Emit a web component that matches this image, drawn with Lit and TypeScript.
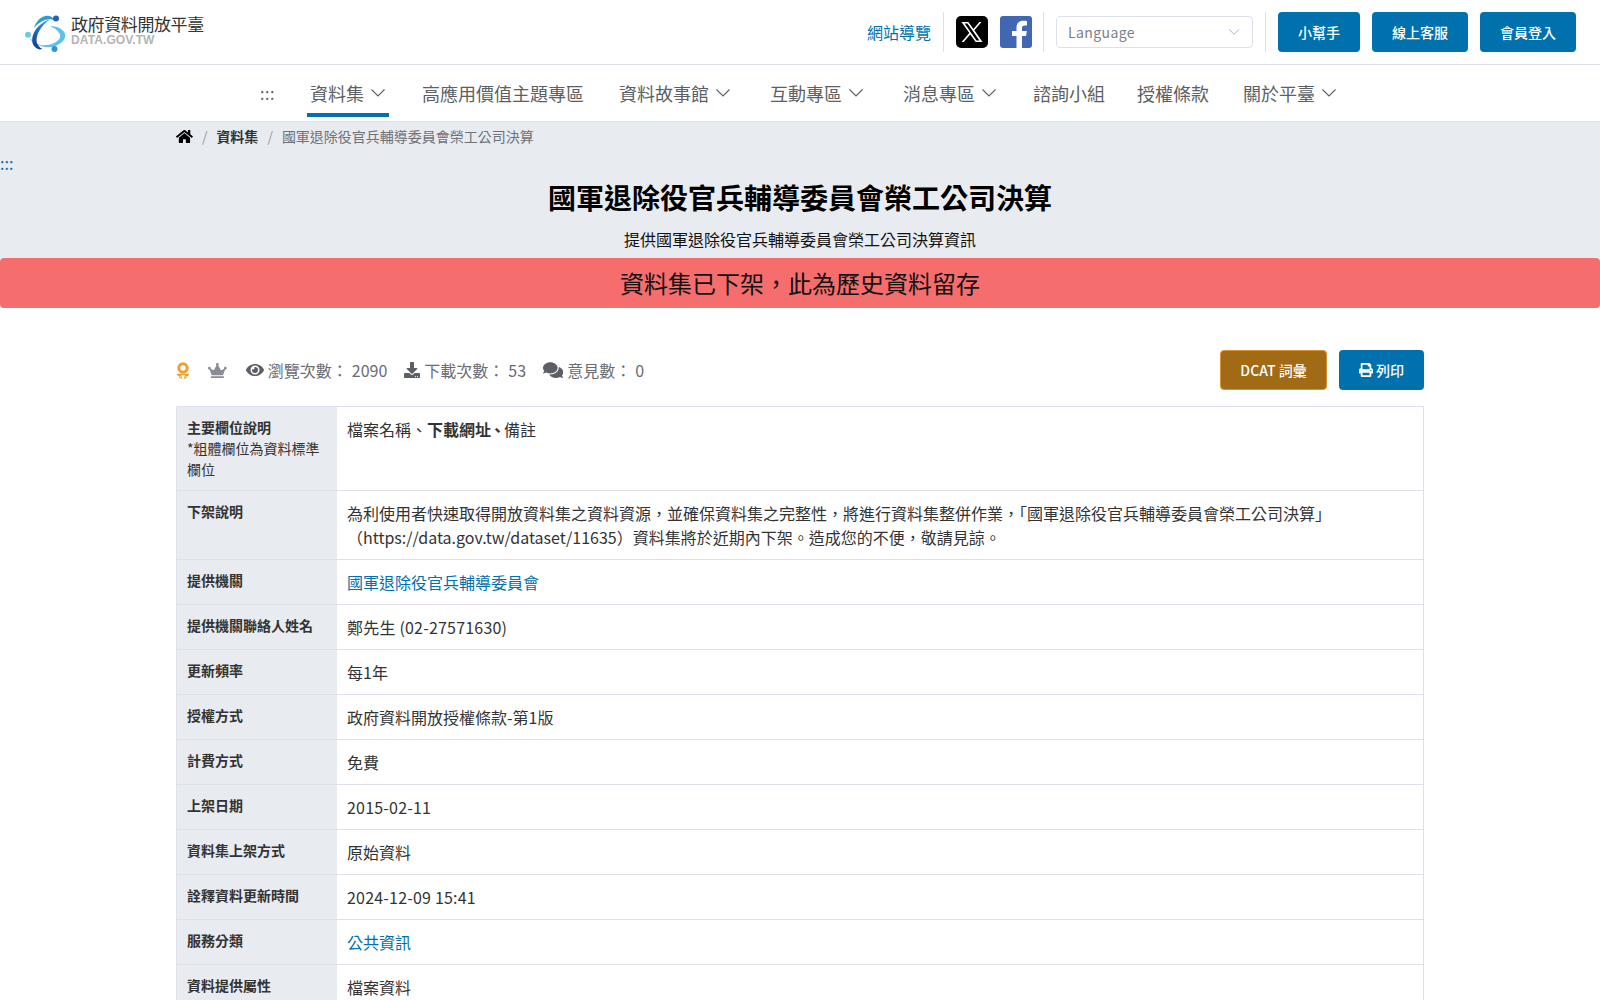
import { LitElement, html, css, svg } from "lit";
import { customElement } from "lit/decorators.js";

const chevron = html`<svg class="chev" viewBox="0 0 16 16"><path d="M1.5 4.5 8 11l6.5-6.5" fill="none" stroke="currentColor" stroke-width="1.1"/></svg>`;

const faIcon = (w: number, d: string, cls = "") =>
  html`<svg class="fa ${cls}" viewBox="0 0 ${w} 512"><path fill="currentColor" d=${d}/></svg>`;

const HOME = "M280.37 148.26L96 300.11V464a16 16 0 0 0 16 16l112.06-.29a16 16 0 0 0 15.92-16V368a16 16 0 0 1 16-16h64a16 16 0 0 1 16 16v95.64a16 16 0 0 0 16 16.05L464 480a16 16 0 0 0 16-16V300L295.67 148.26a12.19 12.19 0 0 0-15.3 0zM571.6 251.47L488 182.56V44.05a12 12 0 0 0-12-12h-56a12 12 0 0 0-12 12v72.61L318.47 43a48 48 0 0 0-61 0L4.34 251.47a12 12 0 0 0-1.6 16.9l25.5 31A12 12 0 0 0 45.15 301l235.22-193.74a12.19 12.19 0 0 1 15.3 0L530.9 301a12 12 0 0 0 16.9-1.6l25.5-31a12 12 0 0 0-1.7-16.93z";
const EYE = "M572.52 241.4C518.29 135.59 410.93 64 288 64S57.68 135.64 3.48 241.41a32.4 32.4 0 0 0 0 29.2C57.71 376.41 165.07 448 288 448s230.32-71.64 284.52-177.41a32.4 32.4 0 0 0 0-29.19zM288 400a144 144 0 1 1 144-144 143.93 143.93 0 0 1-144 144zm0-240a95.31 95.31 0 0 0-25.31 3.79 47.85 47.85 0 0 1-66.9 66.9A95.78 95.78 0 1 0 288 160z";
const DOWNLOAD = "M216 0h80c13.3 0 24 10.7 24 24v168h87.7c17.8 0 26.7 21.5 14.1 34.1L269.7 378.3c-7.5 7.5-19.8 7.5-27.3 0L90.1 226.1c-12.6-12.6-3.7-34.1 14.1-34.1H192V24c0-13.3 10.7-24 24-24zm296 376v112c0 13.3-10.7 24-24 24H24c-13.3 0-24-10.7-24-24V376c0-13.3 10.7-24 24-24h146.7l49 49c20.1 20.1 52.5 20.1 72.6 0l49-49H488c13.3 0 24 10.7 24 24zm-124 88c0-11-9-20-20-20s-20 9-20 20 9 20 20 20 20-9 20-20zm64 0c0-11-9-20-20-20s-20 9-20 20 9 20 20 20 20-9 20-20z";
const COMMENTS = "M416 192c0-88.4-93.1-160-208-160S0 103.6 0 192c0 34.3 14.1 65.9 38 92-13.4 30.2-35.5 54.2-35.8 54.5-2.2 2.3-2.8 5.7-1.5 8.7S4.8 352 8 352c36.6 0 66.9-12.3 88.7-25 32.2 15.7 70.3 25 111.3 25 114.9 0 208-71.6 208-160zm122 220c23.9-26 38-57.7 38-92 0-66.9-53.5-124.2-129.3-148.1.9 6.6 1.3 13.3 1.3 20.1 0 105.9-107.7 192-240 192-10.8 0-21.3-.8-31.7-1.9C207.8 439.6 281.8 480 368 480c41 0 79.1-9.2 111.3-25 21.8 12.7 52.1 25 88.7 25 3.2 0 6.1-1.9 7.3-4.8 1.3-2.9.7-6.3-1.5-8.7-.3-.3-22.4-24.2-35.8-54.5z";
const PRINT = "M448 192V77.25c0-8.49-3.37-16.62-9.37-22.63L393.37 9.37c-6-6-14.14-9.37-22.63-9.37H96C78.33 0 64 14.33 64 32v160c-35.35 0-64 28.65-64 64v112c0 8.84 7.16 16 16 16h48v96c0 17.67 14.33 32 32 32h320c17.67 0 32-14.33 32-32v-96h48c8.84 0 16-7.16 16-16V256c0-35.35-28.65-64-64-64zm-64 256H128v-96h256v96zm0-224H128V64h192v48c0 8.84 7.16 16 16 16h48v96zm48 72c-13.25 0-24-10.75-24-24 0-13.26 10.75-24 24-24s24 10.74 24 24c0 13.25-10.75 24-24 24z";
const CROWN = "M528 448H112c-8.8 0-16 7.2-16 16v32c0 8.8 7.2 16 16 16h416c8.8 0 16-7.2 16-16v-32c0-8.8-7.2-16-16-16zm64-320c-26.5 0-48 21.5-48 48 0 7.1 1.6 13.7 4.4 19.8L476 239.2c-15.4 9.2-35.3 4-44.2-11.6L350.3 85C361 76.2 368 63 368 48c0-26.5-21.5-48-48-48s-48 21.5-48 48c0 15 7 28.2 17.7 37l-81.5 142.6c-8.9 15.6-28.9 20.8-44.2 11.6l-72.3-43.4c2.7-6 4.4-12.7 4.4-19.8 0-26.5-21.6-48-48.1-48S0 149.5 0 176s21.5 48 48 48c2.6 0 5.2-.4 7.7-.8L128 416h384l72.3-192.8c2.5.4 5.1.8 7.7.8 26.5 0 48-21.5 48-48s-21.5-48-48-48z";

const logoMark = svg`
  <defs>
    <linearGradient id="crescent" x1="0.6" y1="0" x2="0.3" y2="1">
      <stop offset="0" stop-color="#2f9ad6"/>
      <stop offset="0.55" stop-color="#1d5fb4"/>
      <stop offset="1" stop-color="#17408f"/>
    </linearGradient>
  </defs>
  <path d="M28 34.500c2 3.500 6 6.500 10.500 8.300l-1 1.200C33 42 29.500 38.500 28 34.500z" fill="#5cc3e8"/>
  <path d="M37 42.500C46 45 57 41 59 35.500 60.200 31.500 56 27 49 24c10 .5 16 5 15.200 10.500C63 43 47 49 37 42.500z" fill="#5cc3e8"/>
  <path d="M38.500 47.500C31 45.500 29.500 38 32.800 31 35.800 25 42 19.300 49 17.500 42 22 37 29 35.800 35.500 35 40.500 36.500 44.500 41.500 47z" fill="url(#crescent)"/>
  <path d="M33 26C35 18.500 41.500 13 47 13.700 50 14 52 15.500 53 18 47 15.500 39 19 33 26z" fill="#2f9ad6"/>
  <circle cx="55" cy="16.500" r="3" fill="#2b5fb8"/>
  <circle cx="27" cy="32.700" r="3" fill="#6cc7ea"/>
  <circle cx="53.500" cy="47" r="3" fill="#2f93d6"/>
`;

type Row = { label: unknown; value: unknown };

const rows: Row[] = [
  { label: html`下架說明`, value: html`為利使用者快速取得開放資料集之資料資源，並確保資料集之完整性，將進行資料集整併作業，「國軍退除役官兵輔導委員會榮工公司決算」（https://data.gov.tw/dataset/11635）資料集將於近期內下架。造成您的不便，敬請見諒。` },
  { label: html`提供機關`, value: html`<a>國軍退除役官兵輔導委員會</a>` },
  { label: html`提供機關聯絡人姓名`, value: html`<span class="num">鄭先生 (02-27571630)</span>` },
  { label: html`更新頻率`, value: html`每1年` },
  { label: html`授權方式`, value: html`政府資料開放授權條款-第1版` },
  { label: html`計費方式`, value: html`免費` },
  { label: html`上架日期`, value: html`<span class="num">2015-02-11</span>` },
  { label: html`資料集上架方式`, value: html`原始資料` },
  { label: html`詮釋資料更新時間`, value: html`<span class="num">2024-12-09 15:41</span>` },
  { label: html`服務分類`, value: html`<a>公共資訊</a>` },
  { label: html`資料提供屬性`, value: html`檔案資料` },
];

const navItems = [
  { t: "資料集", c: true, active: true },
  { t: "高應用價值主題專區" },
  { t: "資料故事館", c: true },
  { t: "互動專區", c: true },
  { t: "消息專區", c: true },
  { t: "諮詢小組" },
  { t: "授權條款" },
  { t: "關於平臺", c: true },
];

@customElement("app-root")
export class AppRoot extends LitElement {
  static styles = css`
    :host {
      display: block;
      height: 1000px;
      overflow: hidden;
      background: #fff;
      color: #333;
      font-family: "Noto Sans CJK TC", "Noto Sans", sans-serif;
      font-size: 16px;
      line-height: 1.5;
    }
    a {
      color: #0071ad;
      text-decoration: none;
    }
    .fa {
      display: block;
      height: 16px;
      width: auto;
    }
    .top {
      display: flex;
      align-items: center;
      justify-content: space-between;
      height: 64px;
      padding: 0 24px;
      border-bottom: 1px solid #dee1ea;
    }
    .brand {
      display: flex;
      align-items: center;
      gap: 5px;
    }
    .brand svg {
      width: 42px;
      height: 40px;
      display: block;
    }
    .brand-text {
      margin-top: -4px;
    }
    .brand-name {
      font-size: 17px;
      line-height: 20px;
      color: #333;
      letter-spacing: -0.4px;
    }
    .brand-en {
      font-family: "Liberation Sans", sans-serif;
      font-size: 12px;
      line-height: 13px;
      font-weight: 700;
      color: #b5b5b5;
      letter-spacing: 0.1px;
    }
    .tools {
      display: flex;
      align-items: center;
      height: 40px;
    }
    .sep {
      width: 1px;
      height: 40px;
      background: #dee1ea;
    }
    .tools .sitemap {
      margin-right: 12px;
    }
    .social {
      display: block;
      width: 32px;
      height: 32px;
    }
    .social.x {
      margin: 0 12px;
    }
    .social.fb {
      margin-right: 11px;
    }
    .lang {
      display: flex;
      align-items: center;
      justify-content: space-between;
      box-sizing: border-box;
      width: 197px;
      height: 32px;
      margin: 0 12px;
      padding: 0 12px 0 11px;
      border: 1px solid #dee1ea;
      border-radius: 4px;
      font-size: 14px;
      color: #7c8089;
      letter-spacing: 0.4px;
    }
    .lang .chev {
      width: 12px;
      height: 12px;
      color: #9a9ea8;
    }
    .btn {
      display: flex;
      align-items: center;
      justify-content: center;
      gap: 3px;
      height: 40px;
      box-sizing: border-box;
      padding: 0 20px;
      border-radius: 4px;
      background: #0071ad;
      color: #fff;
      font-size: 14px;
      font-weight: 500;
    }
    .tools .btn {
      margin-left: 12px;
    }
    .menu {
      display: flex;
      align-items: center;
      justify-content: center;
      height: 56px;
      border-bottom: 1px solid #dee1ea;
      color: #5c5f66;
      font-size: 18px;
    }
    .menu .dots {
      font-size: 16px;
      margin-right: 32px;
      letter-spacing: 0.5px;
    }
    .menu-item {
      position: relative;
      display: flex;
      align-items: center;
      gap: 6px;
      height: 56px;
      padding: 0 3px;
      margin-right: 29px;
    }
    .menu-item:nth-child(2) {
      margin-right: 30px;
    }
    .menu-item:nth-child(4),
    .menu-item:nth-child(5) {
      margin-right: 33px;
    }
    .menu-item:nth-child(6) {
      margin-right: 30px;
    }
    .menu-item:nth-child(7) {
      margin-right: 26px;
    }
    .menu-item:nth-child(8) {
      margin-right: 28px;
    }
    .menu-item:last-child {
      margin-right: 0;
    }
    .menu-item .chev {
      width: 16px;
      height: 16px;
    }
    .menu-item.active::after {
      content: "";
      position: absolute;
      left: 0;
      right: 0;
      bottom: 4px;
      height: 4px;
      background: #0071ad;
    }
    .band {
      background: #e8ebf0;
      height: 136px;
      box-sizing: border-box;
    }
    .crumbs {
      display: flex;
      align-items: center;
      width: 1248px;
      height: 29px;
      margin: 0 auto;
      font-size: 14px;
      color: #6e7178;
    }
    .crumbs .fa {
      height: 15px;
      color: #000;
    }
    .crumbs .slash {
      margin: 0 9px;
      color: #9a9da3;
    }
    .crumbs b {
      color: #333;
      font-weight: 700;
    }
    .skip {
      margin-top: 2px;
      font-size: 16px;
      line-height: 20px;
      height: 20px;
      color: #0071ad;
    }
    h1 {
      margin: 3px 0 0;
      text-align: center;
      font-size: 28px;
      line-height: 42px;
      font-weight: 700;
      color: #000;
    }
    .sub {
      margin: 9px 0 0;
      text-align: center;
      color: #111;
    }
    .notice {
      height: 50px;
      display: flex;
      align-items: center;
      justify-content: center;
      border-radius: 4px;
      background: #f66d6e;
      color: #111;
      font-size: 24px;
    }
    .main {
      width: 1248px;
      margin: 42px auto 0;
    }
    .meta {
      display: flex;
      align-items: center;
      justify-content: space-between;
      height: 40px;
      margin-bottom: 16px;
    }
    .stats {
      display: flex;
      align-items: center;
      color: #696c73;
    }
    .stats .fa {
      color: #5c5f66;
      margin-right: 4px;
    }
    .stats .val {
      margin-left: 4px;
      margin-right: 17px;
    }
    .award {
      width: 14px;
      height: 17px;
      display: block;
      margin-right: 18px;
    }
    .stats .crown {
      height: 15px;
      color: #888c96;
      margin-right: 19px;
    }
    .stats .cmt {
      height: 18px;
    }
    .actions {
      display: flex;
      gap: 12px;
    }
    .btn.dcat {
      background: #a16a15;
      border: 1px solid #d9922e;
      width: 107px;
      padding: 0;
    }
    .btn.print {
      width: 85px;
      padding: 0;
    }
    .btn.print .fa {
      height: 14px;
    }
    .table {
      display: grid;
      grid-template-columns: 160px 1fr;
      border: 1px solid #dee1ea;
      border-bottom: none;
    }
    .th,
    .td {
      padding: 10px;
      border-bottom: 1px solid #dee1ea;
    }
    .th {
      background: #e8ebf0;
      font-size: 14px;
      line-height: 21px;
    }
    .th b {
      font-weight: 700;
      color: #333;
    }
    .th small {
      display: block;
      font-size: 14px;
    }
    .td strong {
      font-weight: 700;
    }
    .td .narrow {
      font-weight: 700;
      margin-left: -1.5px;
      letter-spacing: -1.5px;
    }
    .td .num {
      letter-spacing: 0.2px;
    }
  `;

  render() {
    return html`
      <header class="top">
        <div class="brand">
          <svg viewBox="23 10 42 40">${logoMark}</svg>
          <div class="brand-text">
            <div class="brand-name">政府資料開放平臺</div>
            <div class="brand-en">DATA.GOV.TW</div>
          </div>
        </div>
        <div class="tools">
          <a class="sitemap">網站導覽</a>
          <span class="sep"></span>
          <svg class="social x" viewBox="0 0 32 32">
            <rect width="32" height="32" rx="5" fill="#000"/>
            <path d="M5.500 6h6.800l5.100 7 6-7h2.100l-7.100 8.300L26.500 26h-6.800l-5.500-7.600L7.700 26H5.600l7.700-8.900z M8.600 7.600l11.900 16.800h2.900L11.500 7.600z" fill="#fff" fill-rule="evenodd"/>
          </svg>
          <svg class="social fb" viewBox="0 0 32 32">
            <rect width="32" height="32" rx="3" fill="#4267b2"/>
            <path d="M22 32V20h4.100l.7-5H22v-3c0-1.500.7-2.600 2.700-2.600H27V5.100C26.200 5 24.700 4.800 23.200 4.800c-4 0-6.700 2.400-6.700 6.800V15H12v5h4.500v12z" fill="#fff"/>
          </svg>
          <span class="sep"></span>
          <span class="lang">Language ${chevron}</span>
          <span class="sep"></span>
          <a class="btn">小幫手</a>
          <a class="btn">線上客服</a>
          <a class="btn">會員登入</a>
        </div>
      </header>
      <nav class="menu">
        <span class="dots">:::</span>
        ${navItems.map(
          (n) => html`<span class="menu-item ${n.active ? "active" : ""}">${n.t}${n.c ? chevron : ""}</span>`
        )}
      </nav>
      <section class="band">
        <div class="crumbs">
          ${faIcon(576, HOME)}
          <span class="slash">/</span>
          <b>資料集</b>
          <span class="slash">/</span>
          <span>國軍退除役官兵輔導委員會榮工公司決算</span>
        </div>
        <div class="skip">:::</div>
        <h1>國軍退除役官兵輔導委員會榮工公司決算</h1>
        <p class="sub">提供國軍退除役官兵輔導委員會榮工公司決算資訊</p>
      </section>
      <div class="notice">資料集已下架，此為歷史資料留存</div>
      <main class="main">
        <div class="meta">
          <div class="stats">
            <svg class="award" viewBox="0 0 14 17">
              <circle cx="7" cy="6" r="4.200" fill="none" stroke="#f0a02c" stroke-width="3"/>
              <path d="M1 11.800h12v1.200L10.400 15 8.500 13.200h-3L3.600 15 1 13zM3 15.800l2.800-1.700v2.800zM11 15.800l-2.800-1.700v2.800z" fill="#f0a02c"/>
            </svg>
            ${faIcon(640, CROWN, "crown")}
            ${faIcon(576, EYE)}
            <span>瀏覽次數：</span><span class="val">2090</span>
            ${faIcon(512, DOWNLOAD)}
            <span>下載次數：</span><span class="val">53</span>
            ${faIcon(576, COMMENTS, "cmt")}
            <span>意見數：</span><span class="val">0</span>
          </div>
          <div class="actions">
            <a class="btn dcat">DCAT 詞彙</a>
            <a class="btn print">${faIcon(512, PRINT)}列印</a>
          </div>
        </div>
        <div class="table">
          <div class="th"><b>主要欄位說明</b><small>*粗體欄位為資料標準欄位</small></div>
          <div class="td">檔案名稱、<strong>下載網址</strong><span class="narrow">、</span>備註</div>
          ${rows.map(
            (r) => html`<div class="th"><b>${r.label}</b></div><div class="td">${r.value}</div>`
          )}
        </div>
      </main>
    `;
  }
}
